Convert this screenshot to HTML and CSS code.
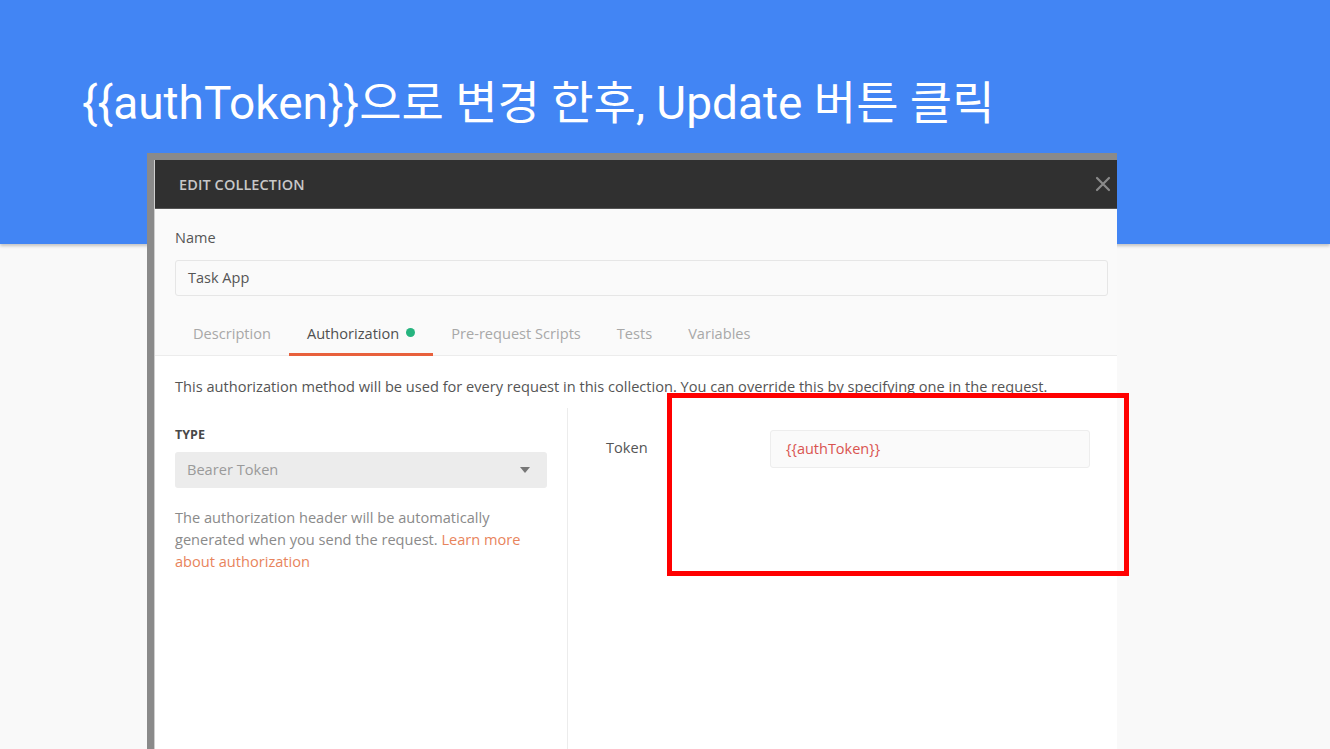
FILE: index.html
```html
<!DOCTYPE html>
<html lang="ko">
<head>
<meta charset="utf-8">
<title>Edit Collection</title>
<link rel="stylesheet" href="styles.css">
</head>
<body>
<div class="slide">
  <header class="banner">
    <h1 class="title">{{authToken}}으로 변경 한후, Update 버튼 클릭</h1>
  </header>

  <div class="shot">
    <div class="modal">
      <div class="modal-head">
        <span class="modal-title">EDIT COLLECTION</span>
        <svg class="close" width="16" height="16" viewBox="0 0 16 16" aria-hidden="true">
          <path d="M2 2 L14 14 M14 2 L2 14" stroke="#8a8a8a" stroke-width="2.2" stroke-linecap="round"/>
        </svg>
      </div>
      <div class="modal-body">
        <div class="name-block">
          <div class="label">Name</div>
          <div class="text-input">Task App</div>
        </div>
        <nav class="tabs">
          <span class="tab">Description</span>
          <span class="tab active">Authorization <i class="dot"></i></span>
          <span class="tab">Pre-request Scripts</span>
          <span class="tab">Tests</span>
          <span class="tab">Variables</span>
        </nav>
        <div class="auth">
          <p class="auth-desc">This authorization method will be used for every request in this collection. You can override this by specifying one in the request.</p>
          <div class="cols">
            <div class="col-left">
              <div class="type-label">TYPE</div>
              <div class="select">
                <span>Bearer Token</span>
                <svg width="10" height="6" viewBox="0 0 10 6" aria-hidden="true"><path d="M0 0 H10 L5 6 Z" fill="#777"/></svg>
              </div>
              <p class="help">The authorization header will be automatically generated when you send the request. <a class="link">Learn more about authorization</a></p>
            </div>
            <div class="col-right">
              <div class="token-row">
                <span class="token-label">Token</span>
                <div class="token-input">{{authToken}}</div>
              </div>
            </div>
          </div>
        </div>
      </div>
    </div>
  </div>

  <div class="highlight"></div>
</div>
</body>
</html>
```

FILE: styles.css
```css
* { box-sizing: border-box; }
html, body { margin: 0; padding: 0; }
body {
  background: #f9f9f9;
  width: 1330px;
  height: 749px;
  overflow: hidden;
  font-family: "Open Sans", "Noto Sans", sans-serif;
}
.slide {
  position: relative;
  width: 1330px;
  height: 749px;
}
.banner {
  height: 244px;
  background: #4285f4;
  box-shadow: 0 2px 3px rgba(0,0,0,0.22);
  padding: 73px 0 0 82px;
}
.title {
  margin: 0;
  font-family: Roboto, "Noto Sans CJK KR", sans-serif;
  font-weight: 400;
  font-size: 46px;
  line-height: 60px;
  color: #ffffff;
  letter-spacing: 0;
}

/* screenshot of the app, laid over the banner */
.shot {
  position: absolute;
  left: 147px;
  top: 153px;
  width: 970px;
  height: 596px;
  background: #8a8a8a;
  padding: 7px 0 0 8px;
}
.modal {
  height: 100%;
  display: flex;
  flex-direction: column;
  background: #fafafa;
  box-shadow: -1px 0 0 #cfcfcf;
}
.modal-head {
  height: 48px;
  flex: none;
  background: #303030;
  display: flex;
  align-items: center;
  justify-content: space-between;
  padding: 0 6px 0 24px;
}
.modal-title {
  color: #c8c8c8;
  font-size: 14.5px;
  font-weight: 600;
  letter-spacing: 0.1px;
}
.modal-body {
  flex: 1;
  display: flex;
  flex-direction: column;
  border-top: 1px solid #555;
}
.name-block {
  padding: 19px 9px 0 20px;
}
.label {
  font-size: 14.5px;
  line-height: 20px;
  color: #555;
}
.text-input {
  margin-top: 12px;
  height: 36px;
  border: 1px solid #e6e6e6;
  border-radius: 3px;
  background: #fafafa;
  padding: 0 12px;
  font-size: 14.5px;
  line-height: 34px;
  color: #555;
}
.tabs {
  margin-top: 16px;
  height: 44px;
  display: flex;
  padding-left: 20px;
  border-bottom: 1px solid #ececec;
}
.tab {
  display: flex;
  align-items: center;
  padding: 0 18px;
  font-size: 14.6px;
  color: #a8a8a8;
  border-bottom: 3px solid transparent;
  margin-bottom: -1px;
}
.tab.active {
  color: #505050;
  border-bottom-color: #e8603c;
}
.dot {
  display: inline-block;
  width: 9px;
  height: 9px;
  border-radius: 50%;
  background: #26b47f;
  margin-left: 7px;
}
.auth {
  flex: 1;
  background: #ffffff;
  display: flex;
  flex-direction: column;
}
.auth-desc {
  margin: 0;
  padding: 20px 20px 0 20px;
  font-size: 14.6px;
  line-height: 20px;
  color: #555;
  white-space: nowrap;
}
.cols {
  flex: 1;
  display: flex;
  margin-top: 12px;
}
.col-left {
  width: 413px;
  flex: none;
  padding: 19px 20px 0 20px;
  border-right: 1px solid #ececec;
}
.type-label {
  font-size: 12.5px;
  line-height: 16px;
  font-weight: 700;
  color: #484848;
}
.select {
  margin-top: 9px;
  height: 36px;
  background: #ececec;
  border-radius: 3px;
  display: flex;
  align-items: center;
  justify-content: space-between;
  padding: 0 17px 0 12px;
  font-size: 14.6px;
  color: #9a9a9a;
}
.select span { margin-top: -2px; }
.help {
  margin: 18px 0 0 0;
  font-size: 14.6px;
  line-height: 22px;
  color: #8a8a8a;
  padding-right: 10px;
}
.link { color: #e8845c; }
.col-right {
  flex: 1;
  padding: 22px 27px 0 38px;
}
.token-row {
  display: flex;
  align-items: center;
}
.token-label {
  width: 164px;
  font-size: 14.6px;
  color: #555;
  margin-top: -4px;
}
.token-input {
  width: 320px;
  height: 38px;
  border: 1px solid #ededed;
  border-radius: 3px;
  background: #fafafa;
  padding: 0 15px;
  font-size: 14.5px;
  line-height: 36px;
  color: #d9534f;
}

/* annotation overlay */
.highlight {
  position: absolute;
  left: 667px;
  top: 393px;
  width: 462px;
  height: 183px;
  border: 5px solid #ff0000;
}
```
